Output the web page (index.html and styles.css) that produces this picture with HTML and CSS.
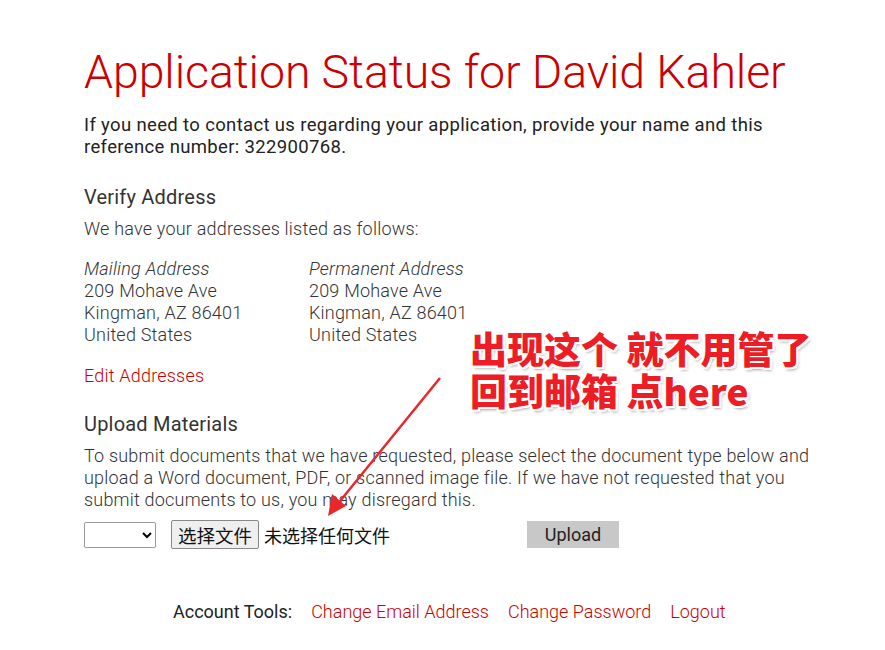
FILE: index.html
```html
<!DOCTYPE html>
<html lang="en">
  <head>
    <meta charset="UTF-8" />
    <title>Application Status</title>
    <link rel="stylesheet" href="styles.css">
  </head>
  <body>
    <div class="page">
      <h1>Application Status for David Kahler</h1>
      <p class="lead">
        If you need to contact us regarding your application, provide your name
        and this reference number: 322900768.
      </p>

      <h2>Verify Address</h2>
      <p>We have your addresses listed as follows:</p>

      <div class="addresses">
        <div class="address">
          <em>Mailing Address</em><br />
          209 Mohave Ave<br />
          Kingman, AZ 86401<br />
          United States
        </div>
        <div class="address">
          <em>Permanent Address</em><br />
          209 Mohave Ave<br />
          Kingman, AZ 86401<br />
          United States
        </div>
      </div>

      <p class="edit"><a href="#">Edit Addresses</a></p>

      <h2>Upload Materials</h2>
      <p>
        To submit documents that we have requested, please select the document
        type below and upload a Word document, PDF, or scanned image file. If we
        have not requested that you submit documents to us, you may disregard
        this.
      </p>

      <div class="upload-row">
        <select class="doc-type"><option></option></select>
        <span class="file-pick">
          <button class="file-btn">选择文件</button>
          <span class="file-name">未选择任何文件</span>
        </span>
        <button class="upload-btn">Upload</button>
      </div>

      <div class="tools">
        <span class="tools-label">Account Tools:</span>
        <a href="#">Change Email Address</a>
        <a href="#">Change Password</a>
        <a href="#">Logout</a>
      </div>

      <!-- annotation overlay -->
      <div class="note">出现这个 就不用管了<br />回到邮箱 点here</div>
      <svg class="arrow" width="130" height="150" viewBox="0 0 130 150">
        <line x1="118" y1="4" x2="14" y2="132" stroke="#e8262c" stroke-width="2.5" />
        <polygon points="6,142 10,120 24,132" fill="#e8262c" />
      </svg>
    </div>
  </body>
</html>
```

FILE: styles.css
```css
body {
  margin: 0;
  background: #fff;
  font-family: Roboto, "Liberation Sans", sans-serif;
  color: #333;
}
.page {
  position: relative;
  width: 730px;
  padding: 44px 0 0 84px;
  font-size: 18px;
  line-height: 22px;
  font-weight: 300;
  letter-spacing: 0.2px;
}
h1 {
  margin: 0 0 14px;
  font-size: 46.5px;
  line-height: 56px;
  font-weight: 300;
  color: #cc0000;
  letter-spacing: -0.1px;
}
p {
  margin: 0;
}
.lead {
  font-size: 18.5px;
  font-weight: 400;
  letter-spacing: 0.35px;
  color: #222;
  margin-bottom: 27px;
}
h2 {
  margin: 0 0 9px;
  font-size: 20px;
  line-height: 24px;
  font-weight: 400;
  color: #333;
}
.addresses {
  display: flex;
  margin-top: 18px;
}
.address {
  width: 225px;
}
.edit {
  margin: 19px 0 25px;
}
a {
  color: #cc0000;
  text-decoration: none;
}
.upload-row {
  display: flex;
  align-items: center;
  margin-top: 9px;
}
.doc-type {
  width: 72px;
  height: 26px;
  margin-right: 15px;
  border: 1px solid #999;
  border-radius: 2px;
  background: #fff;
}
.file-pick {
  display: flex;
  align-items: center;
  width: 356px;
}
.file-btn {
  height: 29px;
  padding: 0 6px;
  font-family: "Noto Sans CJK SC", sans-serif;
  font-size: 18.5px;
  border: 1px solid #888;
  border-radius: 2px;
  background: #efefef;
  color: #111;
}
.file-name {
  margin-left: 5px;
  font-family: "Noto Sans CJK SC", sans-serif;
  font-size: 18px;
  font-weight: 400;
  letter-spacing: 0;
  color: #111;
}
.upload-btn {
  width: 92px;
  height: 27px;
  border: none;
  background: #c8c8c8;
  color: #222;
  font-family: Roboto, sans-serif;
  font-size: 18px;
}
.tools {
  display: flex;
  gap: 19px;
  margin: 52px 0 0 89px;
  letter-spacing: 0;
}
.tools-label {
  color: #222;
  font-weight: 400;
}
.note {
  position: absolute;
  left: 470px;
  top: 327px;
  font-family: "Noto Sans CJK SC", sans-serif;
  font-weight: 900;
  font-size: 37px;
  line-height: 42px;
  letter-spacing: 0;
  color: #ee1c25;
  text-shadow: 2px 0 0 #fff, -2px 0 0 #fff, 0 2px 0 #fff, 0 -2px 0 #fff,
    2px 2px 0 #fff, -2px 2px 0 #fff, 2px -2px 0 #fff, -2px -2px 0 #fff,
    2px 3px 3px rgba(0, 0, 0, 0.35);
}
.arrow {
  position: absolute;
  left: 322px;
  top: 374px;
}
```
